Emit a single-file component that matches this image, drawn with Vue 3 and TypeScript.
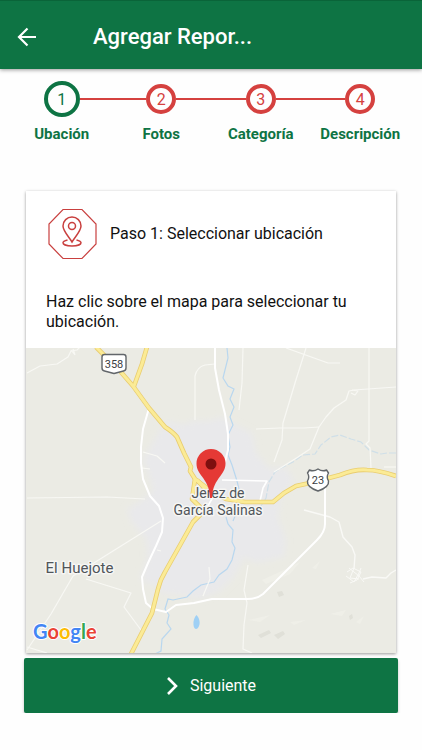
<script setup lang="ts">
import { ref } from 'vue'

interface Step {
  number: number
  label: string
}

const steps: Step[] = [
  { number: 1, label: 'Ubación' },
  { number: 2, label: 'Fotos' },
  { number: 3, label: 'Categoría' },
  { number: 4, label: 'Descripción' },
]

const current = ref(1)
</script>

<template>
  <div class="page">
    <header class="bar">
      <button class="back" type="button" aria-label="Volver">
        <svg viewBox="0 0 20 20" width="20" height="20" aria-hidden="true">
          <path d="M10.500 1.500 2 10l8.500 8.500M2 10h17" fill="none" stroke="#fff" stroke-width="2.200" />
        </svg>
      </button>
      <h1 class="title">Agregar Repor...</h1>
    </header>

    <main class="content">
      <ol class="stepper">
        <li v-for="step in steps" :key="step.number" class="step">
          <div class="track">
            <span class="line"></span>
            <span class="circle" :class="{ active: step.number === current }">{{ step.number }}</span>
            <span class="line"></span>
          </div>
          <span class="label">{{ step.label }}</span>
        </li>
      </ol>

      <section class="card">
        <div class="card-head">
          <svg class="badge" viewBox="0 0 50 52" width="50" height="52" aria-hidden="true">
            <g fill="none" stroke="#c9403f">
              <path d="M16 1.500h19L49 16v20L35 50.500H16L2 36V16z" stroke-width="1.200" />
              <path d="M25 34c-3-5-9-11-9-16a9 9 0 0 1 18 0c0 5-6 11-9 16z" stroke-width="1.500" />
              <circle cx="25" cy="18" r="3.500" stroke-width="1.500" />
              <path d="M20.500 32c-2.500.6-4.500 1.500-4.500 2.700 0 1.900 4 3.300 9 3.300s9-1.400 9-3.300c0-1.200-2-2.100-4.500-2.700" stroke-width="1.500" />
            </g>
          </svg>
          <h2 class="card-title">Paso 1: Seleccionar ubicación</h2>
        </div>
        <p class="hint">Haz clic sobre el mapa para seleccionar tu ubicación.</p>

        <svg class="map" viewBox="26 348 370 305" role="img" aria-label="Mapa de Jerez de García Salinas">
          <defs>
            <filter id="soft" x="-10%" y="-10%" width="120%" height="120%">
              <feGaussianBlur stdDeviation="3" />
            </filter>
          </defs>
          <rect x="26" y="348" width="370" height="305" fill="#ebebe4" />

          <path
            d="M166 421l18 4 8-4h16l14-4 10 6 20 10 4 20 14 16 16-2 8 14-14 18-2 20 8 20-2 18-28 6-12-6-10 20-14 14-20 8-20-4-18-2-8-8-14-6 8-22-2-18-14-16-5-14 14-8 12-10-4-16-6-16z"
            fill="#e9e9eb"
            filter="url(#soft)"
          />

          <!-- relief -->
          <g fill="#e0e0d8">
            <path d="M258 635l11-5 2 3-10 5zM274 635l9-4 2 3-7 5zM277 592l5-1 2 4-5 2zM349 616l3-2 1 4-3 2z" />
          </g>
          <g fill="#efefe8">
            <path d="M262 580l22-10 16-8-10 12-24 10zM312 568l8-7-4 8zM330 614l16-4-4 6zM248 620l22-5-10 7zM290 622l16-2-12 5zM356 622l8-6-4 8z" />
          </g>

          <!-- water -->
          <g fill="none" stroke="#b9d7ef" stroke-width="1.200">
            <path d="M227 348l1 10-5 20 5 8 6 3-4 10 4 8-4 10 3 8-5 10 2 12-2 8 4 10 5 16 3 12-2 16-5 12M226 517l2 7 5 6-1 12 3 6-3 12-5 9-8 6-5 7-13 3-8 6-6 6-14 3-5-1-3 10 4 6-2 8 4 6-9 10-1 12-10 5-3 6" />
            <path d="M396 453h-9l-6 1-12-4-8-8-10-3-11-4-9 2-10 8-6 9-12 1-10 7-12 6-6 4-6 10-3 16-5 8" stroke="#cfdfe8" stroke-dasharray="7 2" />
          </g>
          <path d="M196.500 615c3 3 4 8 2.500 11-1.500 4-5 4-5.500-1-.5-4 1-8 3-10z" fill="#9fd0f5" />

          <!-- minor roads -->
          <g fill="none" stroke="#f8f8f4" stroke-width="1.200" stroke-linejoin="round">
            <path d="M27 373l13-7 17-2 11-7 3-6 6-1 3-3" />
            <path d="M71 350l4 5M73 349l2 6" />
            <path d="M195 420v-44q2-9 10-11l10-1" />
            <path d="M243 348l-1 35-3 27" />
            <path d="M306 348l-11 35-12 40-1 17-8 22" />
            <path d="M286 348l42 15h12" />
            <path d="M256 429l24-1h24l15-1" />
            <path d="M396 387l-42 3-5 1-3 9-12 8-8 9-7 10-9 22-12 8-24 15" />
            <path d="M369 348v93l-3 3 4 4 1 20" />
            <path d="M352 390l6 1-3 4-4-2" />
            <path d="M396 467h-12" />
            <path d="M143 452l14 4 8 7M142 468l8 1" />
            <path d="M27 498l80-1 38 2M161 521l-56 35-32 20-22 38-24 36M86 579l45 14-7 14 17 23M27 647l20 6M157 550l4 1" />
            <path d="M209 567l1 12-7 17M248 565l-4 25 3 13-3 22-1 24 9 4" />
          </g>
          <g fill="none" stroke="#f9f9f6" stroke-width="1.400" stroke-linejoin="round">
            <path d="M304 510l26 7 9 5 4 15 9 10 3 8-1 14M363 579l9-2 14 1 5-5 5-3" />
            <path d="M349 568l10 8 5 6M346 576l8 6 5-9 2-5M347 572l6-4 8 4-4 8-7 3M354 568l-4 10 9 1" stroke-width="1" />
          </g>

          <!-- local roads -->
          <g fill="none" stroke="#fff" stroke-width="2" stroke-linejoin="round">
            <path d="M215 348v20l4 22 6 24 3 20v16l-3 12" />
            <path d="M149 408l-6 21-2 18v16l2 16 7 17 9 10 4 12-1 14-6 14-8 17-6 14 1 12 3 14 7 6 13 3 10-7 18-2 18-4h35q10 0 16-5l54-54q8-8 8-16v-46" />
            <path d="M222 480l45 1-4 7-3 13M213 497l-8 14-9 4" stroke-width="1.600" />
          </g>

          <!-- highways -->
          <g fill="none" stroke="#e9cd70" stroke-width="4.600" stroke-linejoin="round">
            <path d="M96 347l24 24 13 15 16 22 16 19q8 5 12 10l7 16 7 14-1 4 5 8 12 9" />
            <path d="M147 347l-5 17-8 22M195 479l-3 20 8 8v8l-7 7-28 50q-5 8-7 17l-6 24-21 41M197 480l9 10 12 5 8 4 19 3h28l11-9 12-7 14-3 30-8q15-6 27-5 11 0 29 6" />
          </g>
          <g fill="none" stroke="#fbeb96" stroke-width="3" stroke-linejoin="round">
            <path d="M96 347l24 24 13 15 16 22 16 19q8 5 12 10l7 16 7 14-1 4 5 8 12 9" />
            <path d="M147 347l-5 17-8 22M195 479l-3 20 8 8v8l-7 7-28 50q-5 8-7 17l-6 24-21 41M197 480l9 10 12 5 8 4 19 3h28l11-9 12-7 14-3 30-8q15-6 27-5 11 0 29 6" />
          </g>

          <!-- route shields -->
          <g fill="#fff" stroke="#62666a" stroke-width="1.400" stroke-linejoin="round">
            <path d="M104.500 354.500h19q2.500 0 2.500 2.500v11q0 2.500-2.500 3l-9.500 2.500-9.500-2.500q-2.500-.5-2.500-3v-11q0-2.500 2.500-2.500z" />
            <path d="M309.500 470q4 2 8.500-1 4.500 3 8.500 1l2 3q-2.500 4 0 8 1 6-10.500 10-11.500-4-10.500-10 2.500-4 0-8z" />
          </g>
          <g class="route" text-anchor="middle">
            <text x="114" y="368">358</text>
            <text x="318" y="484">23</text>
          </g>

          <g class="place" text-anchor="middle">
            <text class="city" x="218" y="498">Jerez de</text>
            <text class="city" x="218" y="515">García Salinas</text>
            <text x="79.500" y="573">El Huejote</text>
          </g>

          <!-- marker -->
          <path
            d="M210 498c-.5-11-4-16-8-21.500-3-4-5.500-7.500-5.500-13a14.500 14.500 0 0 1 29 0c0 5.500-2.500 9-5.500 13-4 5.500-7.500 10.500-8 21.500z"
            fill="#e53935"
          />
          <circle cx="211" cy="464" r="5.500" fill="#7d0f0f" />

          <text class="brand" x="33" y="639">
            <tspan fill="#4285f4">G</tspan><tspan fill="#ea4335">o</tspan><tspan fill="#fbbc05">o</tspan><tspan fill="#4285f4">g</tspan><tspan fill="#34a853">l</tspan><tspan fill="#ea4335">e</tspan>
          </text>
        </svg>
      </section>

      <button class="next" type="button">
        <svg viewBox="0 0 12 20" width="12" height="20" aria-hidden="true">
          <path d="M2 2l8 8-8 8" fill="none" stroke="#fff" stroke-width="2.600" />
        </svg>
        <span>Siguiente</span>
      </button>
    </main>
  </div>
</template>

<style>
body {
  margin: 0;
  background: #fefefe;
}
</style>

<style scoped>
.page {
  font-family: Roboto, "Liberation Sans", sans-serif;
  color: #111;
}

.bar {
  display: flex;
  align-items: center;
  gap: 48px;
  height: 69px;
  padding: 4px 16px 0;
  box-sizing: border-box;
  background: #0e7444;
  border-top: 1px solid #0a6439;
  box-shadow: 0 1px 4px rgba(0, 0, 0, 0.4);
}

.back {
  display: flex;
  padding: 0 0 0 1px;
  border: 0;
  background: none;
}

.title {
  margin: 0;
  padding-left: 8px;
  color: #fff;
  font-size: 22px;
  font-weight: 500;
  line-height: 28px;
}

.content {
  padding: 12px 12px 0;
}

.stepper {
  display: grid;
  grid-template-columns: repeat(4, 1fr);
  margin: 0;
  padding: 0;
  list-style: none;
}

.step {
  display: flex;
  flex-direction: column;
  align-items: center;
  gap: 7px;
}

.track {
  display: flex;
  align-items: center;
  align-self: stretch;
  height: 36px;
}

.line {
  flex: 1;
  height: 2px;
  background: #d5413f;
}

.step:first-child .line:first-child,
.step:last-child .line:last-child {
  background: none;
}

.circle {
  display: flex;
  align-items: center;
  justify-content: center;
  box-sizing: border-box;
  width: 30px;
  height: 30px;
  border: 4px solid #d5413f;
  border-radius: 50%;
  color: #d5413f;
  font-size: 16px;
}

.circle.active {
  width: 36px;
  height: 36px;
  border-color: #0e7444;
  color: #0e7444;
}

.label {
  color: #0e7444;
  font-size: 15px;
  font-weight: 700;
  line-height: 20px;
}

.card {
  margin: 47px 14px 0;
  background: #fff;
  box-shadow: 0 1px 3px rgba(0, 0, 0, 0.4);
}

.card-head {
  display: flex;
  align-items: center;
  gap: 13px;
  padding: 17px 21px 0;
}

.card-title {
  margin: 0;
  font-size: 16px;
  font-weight: 400;
  line-height: 20px;
}

.hint {
  margin: 0;
  padding: 32px 20px 16px;
  font-size: 16px;
  line-height: 20px;
}

.map {
  display: block;
  width: 100%;
  height: auto;
}

.route {
  fill: #3c4043;
  font-size: 11px;
}

.place {
  fill: #50555a;
  stroke: #f6f6f4;
  stroke-width: 3px;
  stroke-linejoin: round;
  paint-order: stroke;
  font-size: 15px;
}

.city {
  font-size: 14px;
}

.brand {
  stroke: #fff;
  stroke-width: 2px;
  stroke-linejoin: round;
  paint-order: stroke;
  font-family: Lato, Roboto, sans-serif;
  font-size: 20px;
  font-weight: 700;
}

.next {
  display: flex;
  align-items: center;
  justify-content: center;
  gap: 12px;
  width: calc(100% - 24px);
  height: 55px;
  margin: 5px 12px 0;
  padding: 0;
  border: 0;
  border-radius: 2px;
  background: #0e7444;
  box-shadow: 0 2px 3px rgba(0, 0, 0, 0.25);
  color: #fff;
  font-family: inherit;
  font-size: 16px;
  line-height: 20px;
}
</style>
